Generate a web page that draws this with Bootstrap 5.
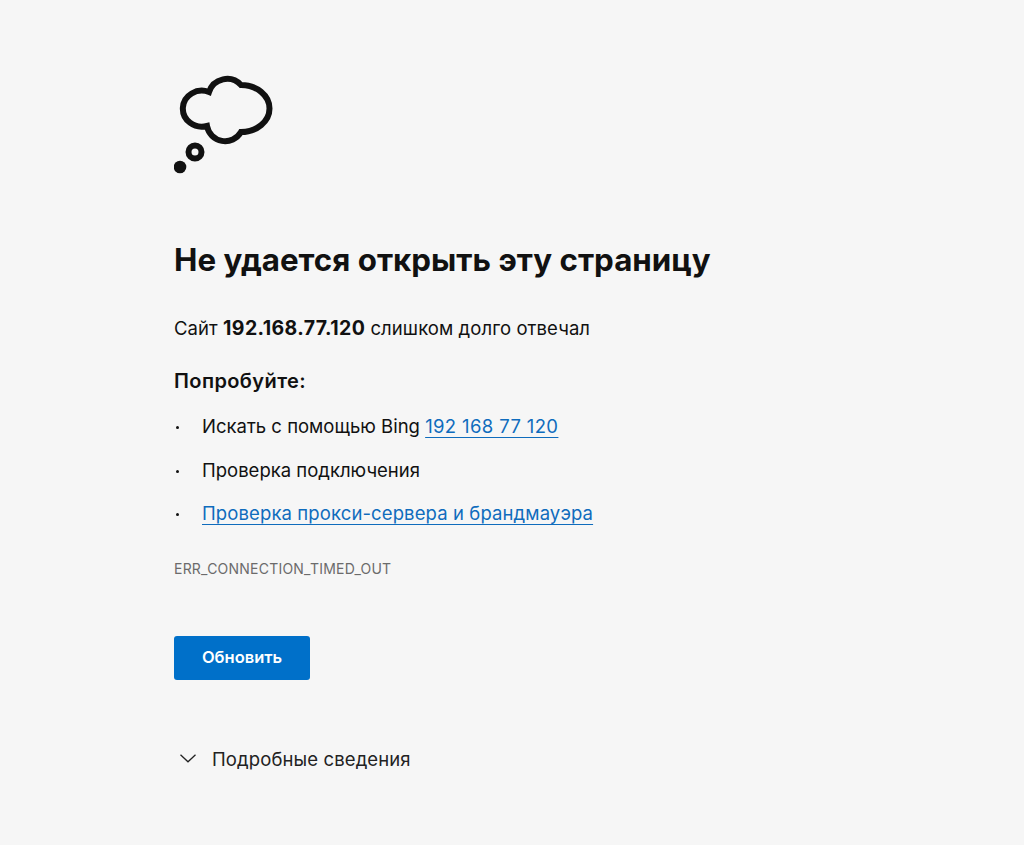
<!DOCTYPE html>
<html lang="ru">
<head>
  <meta charset="UTF-8">
  <meta name="viewport" content="width=device-width, initial-scale=1.0">
  <title>192.168.77.120</title>
  <link href="https://cdn.jsdelivr.net/npm/bootstrap@5.3.1/dist/css/bootstrap.min.css" rel="stylesheet">
  <style>
    body {
      background: #f6f6f6;
      color: #111;
      font-family: Inter, "Noto Sans", sans-serif;
      font-size: 18.5px;
    }
    .err-page {
      padding: 75px 0 0 174px;
    }
    .err-icon {
      display: block;
      width: 100px;
      height: 100px;
    }
    .err-title {
      font-size: 31.3px;
      font-weight: 700;
      line-height: 40px;
      margin: 65px 0 0;
    }
    .err-text {
      line-height: 24px;
      margin: 36px 0 0;
      letter-spacing: .004em;
    }
    .err-text b {
      font-size: 19.5px;
      font-weight: 700;
      letter-spacing: .02em;
    }
    .err-try {
      font-size: 20px;
      font-weight: 600;
      letter-spacing: .02em;
      line-height: 24px;
      margin: 29px 0 0;
    }
    .err-list {
      list-style: none;
      margin: 12px 0 0;
      padding: 0;
    }
    .err-list li {
      line-height: 23.6px;
      padding: 10px 0 10px 28px;
      position: relative;
    }
    .err-list li::before {
      content: "";
      position: absolute;
      left: 2px;
      top: 21px;
      width: 3px;
      height: 3px;
      border-radius: 50%;
      background: #111;
    }
    .err-list a {
      color: #0f6cbd;
      letter-spacing: .006em;
      text-underline-offset: 4px;
    }
    .err-list a.err-num {
      letter-spacing: .02em;
    }
    .err-code {
      color: #6b6b6b;
      font-size: 14px;
      letter-spacing: .016em;
      line-height: 18px;
      margin: 24px 0 0;
    }
    .err-btn {
      background: #0070c9;
      border: 0;
      border-radius: 3px;
      color: #fff;
      font-size: 16.5px;
      font-weight: 600;
      width: 136px;
      height: 44px;
      margin-top: 58px;
    }
    .err-btn:hover {
      background: #0067b8;
      color: #fff;
    }
    .err-details {
      color: #222;
      letter-spacing: .006em;
      line-height: 24px;
      margin-top: 67px;
      gap: 16px;
    }
    .err-details svg {
      margin-left: 6px;
    }
  </style>
</head>
<body>
  <div class="err-page">
    <svg class="err-icon" viewBox="0 0 100 100" fill="none" stroke="#111" stroke-width="6">
      <path d="M35 17A19 19 0 0 1 67 10A28.5 23.5 0 0 1 67 57A18.4 18.4 0 0 1 33 51A19 18 0 1 1 35 17Z"/>
      <circle cx="21" cy="77" r="6.5"/>
      <circle cx="6" cy="92" r="6.3" fill="#111" stroke="none"/>
    </svg>

    <h1 class="err-title">Не удается открыть эту страницу</h1>
    <p class="err-text">Сайт <b>192.168.77.120</b> слишком долго отвечал</p>
    <p class="err-try">Попробуйте:</p>

    <ul class="err-list">
      <li>Искать с помощью Bing <a class="err-num" href="#">192 168 77 120</a></li>
      <li>Проверка подключения</li>
      <li><a href="#">Проверка прокси-сервера и брандмауэра</a></li>
    </ul>

    <p class="err-code">ERR_CONNECTION_TIMED_OUT</p>

    <button type="button" class="btn err-btn d-block">Обновить</button>

    <div class="err-details d-flex align-items-center">
      <svg width="16" height="9" viewBox="0 0 16 9" fill="none" stroke="#222" stroke-width="1.3"><path d="M.5.8l7.5 7 7.5-7"/></svg>
      <span>Подробные сведения</span>
    </div>
  </div>

  <script src="https://cdn.jsdelivr.net/npm/bootstrap@5.3.1/dist/js/bootstrap.bundle.min.js"></script>
</body>
</html>
